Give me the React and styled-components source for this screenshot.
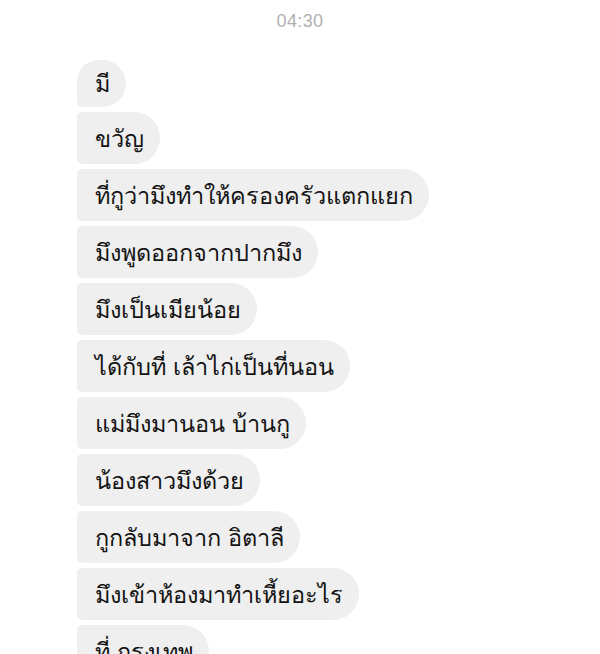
import React from 'react';
import styled, { createGlobalStyle } from 'styled-components';

const GlobalStyle = createGlobalStyle`
    html, body {
        margin: 0;
        padding: 0;
        background: #fff;
        overflow: hidden;
    }
`;

const Screen = styled.div`
    width: 600px;
    height: 654px;
    overflow: hidden;
    background: #fff;
    font-family: 'Liberation Sans', Arial, sans-serif;
`;

const Time = styled.div`
    height: 42px;
    padding-top: 10px;
    box-sizing: border-box;
    text-align: center;
    color: #b0b0b0;
    font-size: 18px;
    line-height: 22px;
    letter-spacing: 0.4px;
`;

const Thread = styled.div`
    display: flex;
    flex-direction: column;
    align-items: flex-start;
    gap: 5px;
    padding: 18px 0 0 77px;
`;

const Bubble = styled.div`
    height: ${({ $first }) => ($first ? '47px' : '52px')};
    display: flex;
    align-items: center;
    padding: 0 16px 0 18px;
    background: #efefef;
    color: #141414;
    font-size: 23.5px;
    white-space: nowrap;
    border-radius: ${({ $first }) => ($first ? '24px' : '5px')} 26px 26px 5px;
`;

const messages = [
    'มี',
    'ขวัญ',
    'ที่กูว่ามึงทำให้ครองครัวแตกแยก',
    'มึงพูดออกจากปากมึง',
    'มึงเป็นเมียน้อย',
    'ได้กับที่ เล้าไก่เป็นที่นอน',
    'แม่มึงมานอน บ้านกู',
    'น้องสาวมึงด้วย',
    'กูกลับมาจาก อิตาลี',
    'มึงเข้าห้องมาทำเหี้ยอะไร',
    'ที่ กรุงเทพ',
];

export default function App() {
    return (
        <Screen>
            <GlobalStyle />
            <Time>04:30</Time>
            <Thread>
                {messages.map((text, i) => (
                    <Bubble key={i} $first={i === 0}>
                        {text}
                    </Bubble>
                ))}
            </Thread>
        </Screen>
    );
}
